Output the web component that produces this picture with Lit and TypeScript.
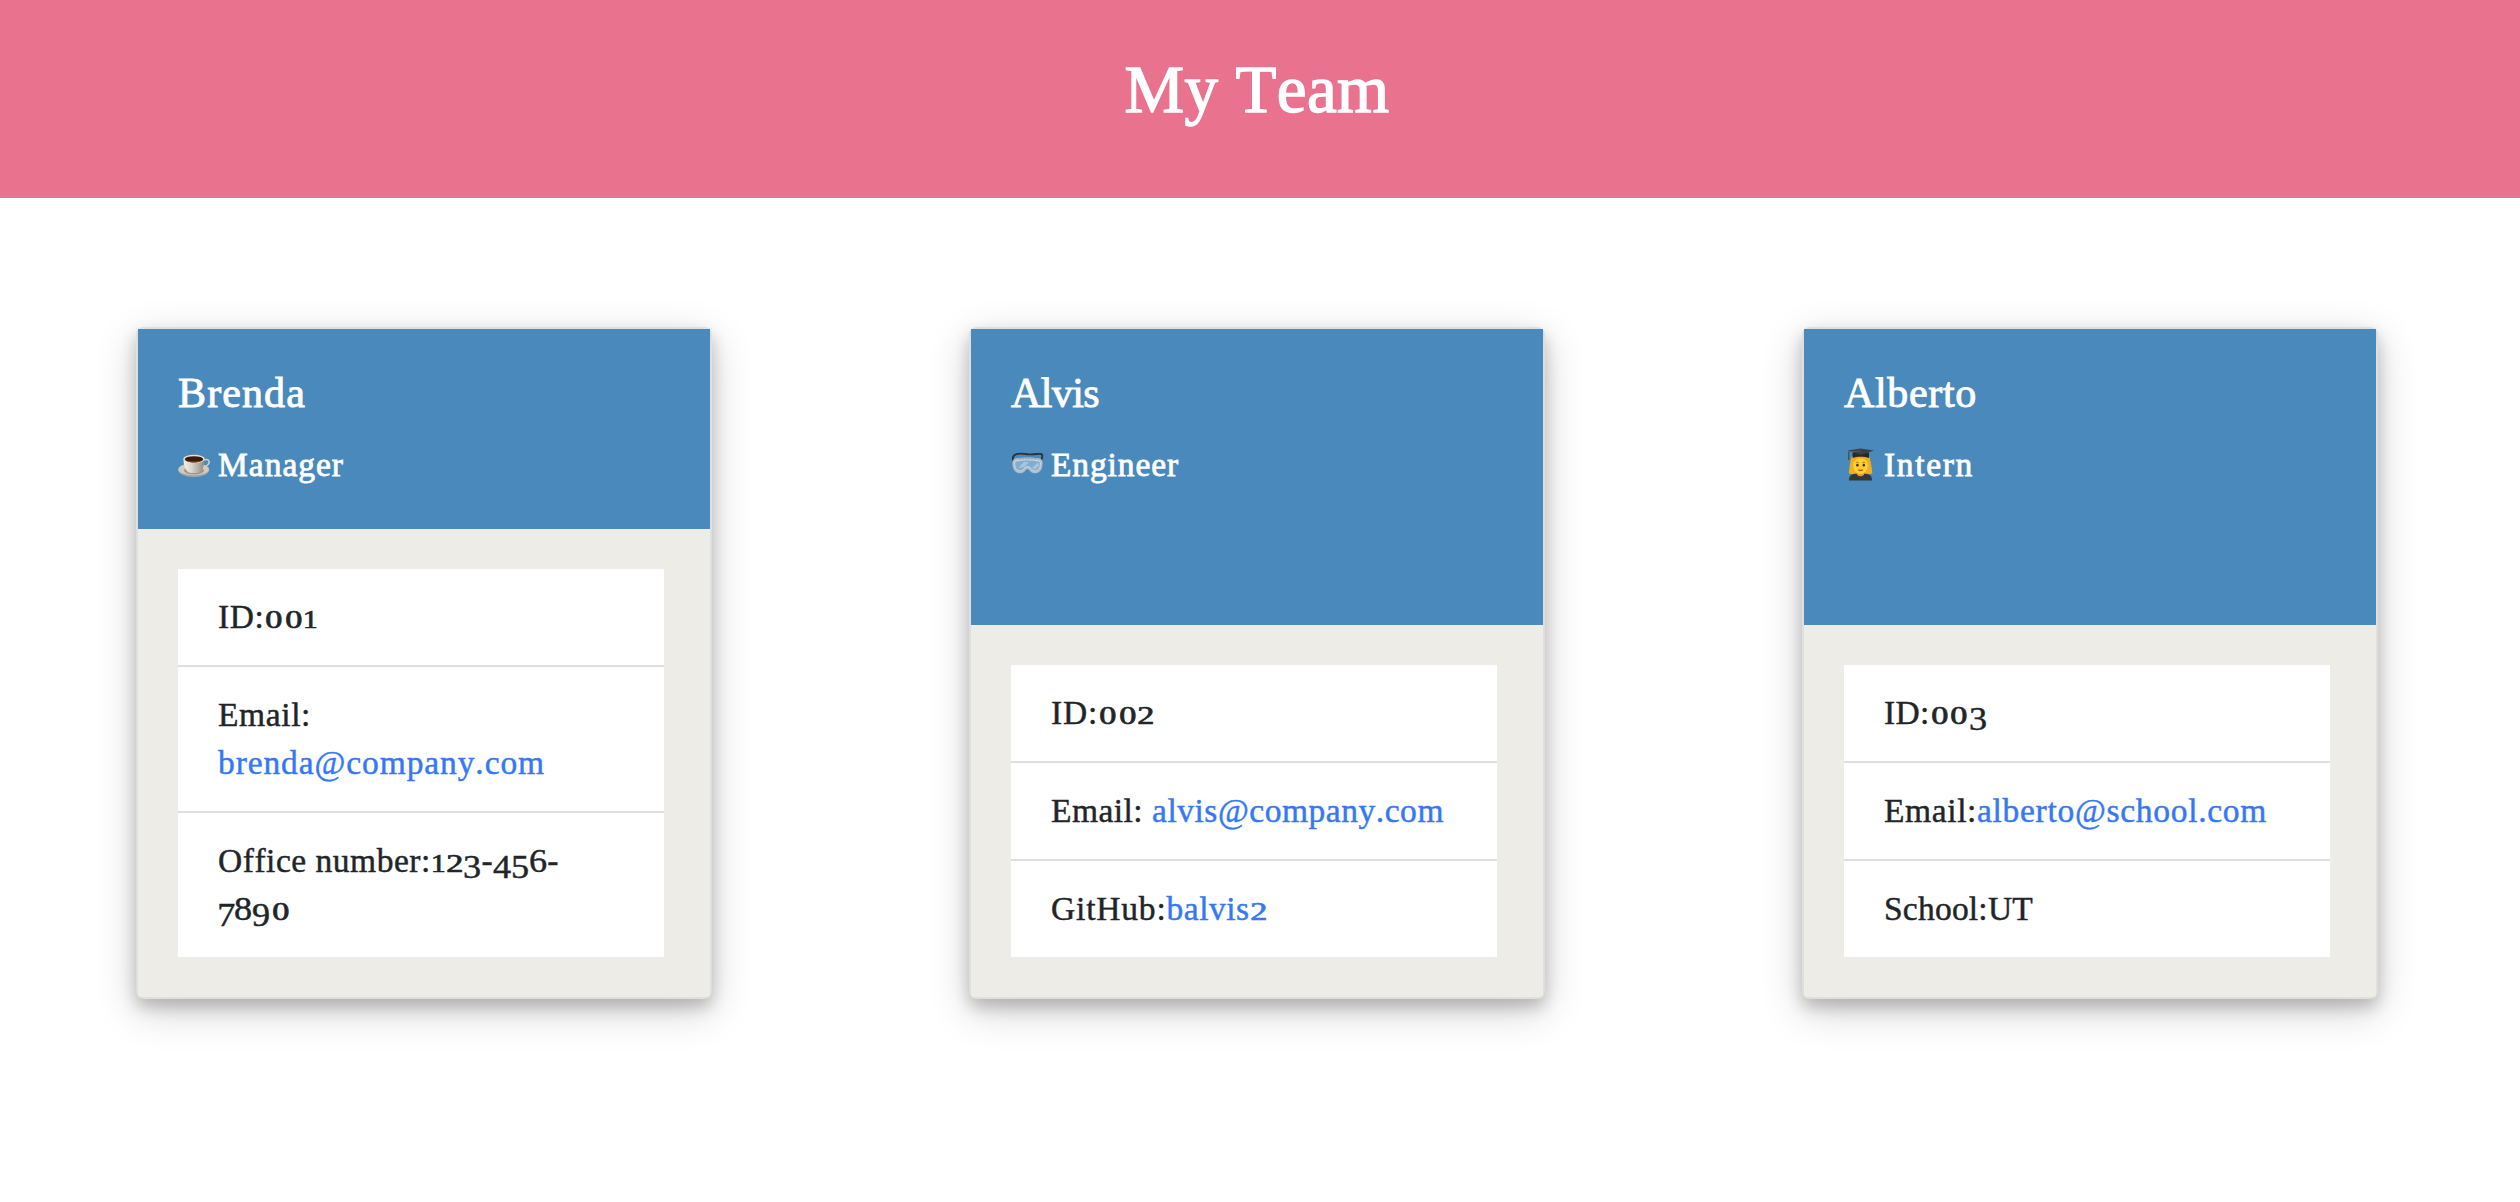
import { LitElement, html, css, TemplateResult } from "lit";
import { customElement, property } from "lit/decorators.js";

interface Segment {
  text: string;
  width: number;
  href?: string;
}

interface Member {
  name: Segment;
  role: Segment;
  icon: TemplateResult;
  rows: Segment[][][];
}

const coffee = html`<svg class="emoji" viewBox="0 0 34 34" aria-hidden="true">
  <defs>
    <linearGradient id="cup" x1="0" x2="1"><stop offset="0" stop-color="#f4f1ea" /><stop offset=".4" stop-color="#d8d4cb" /><stop offset="1" stop-color="#8f8a80" /></linearGradient>
  </defs>
  <path d="M13 6.500c-4-2.500 1-2.500 0-4.500M15.500 6.500c1-2-2-3 2-4" fill="none" stroke="#5a7086" stroke-width="1" opacity=".6" />
  <ellipse cx="15.700" cy="22.300" rx="15.500" ry="6.700" fill="#aaa69d" />
  <ellipse cx="15.700" cy="21.300" rx="15.300" ry="6" fill="#cfcbc2" />
  <ellipse cx="16" cy="22.500" rx="10" ry="4" fill="#9b968c" />
  <path d="M26 12c5-2 7 2.500 3 5.500-1.500 1.200-3 1.500-5 1.500" fill="none" stroke="#d3cfc7" stroke-width="1.500" />
  <path d="M5.500 11c0 8 3 13.500 7 14h7c4-.5 7-6 7-14z" fill="url(#cup)" />
  <ellipse cx="16" cy="11" rx="10.800" ry="4.200" fill="#e4e0d8" />
  <ellipse cx="16" cy="11.300" rx="9.200" ry="3.100" fill="#3a1a0d" />
  <path d="M8.500 12.500c3 2.500 12 2.500 15 0-3 1-12 1-15 0z" fill="#77452a" />
</svg>`;

const goggles = html`<svg class="emoji" viewBox="0 0 34 34" aria-hidden="true">
  <path d="M2.200 13C.5 6.500 5 4.600 16.500 6.200 26 7.300 32 3.500 31.300 8.500c-.2 2-1 3.500-1.800 5" fill="none" stroke="#2d3238" stroke-width="1.900" />
  <path d="M4 10.500c7-1.500 18-1.500 25 0 3 1 3 5 2 9-1 4.500-5 6.500-9 5.500-3.500-1-3.500-4-5.500-4s-2 3-5.500 4c-4 1-8-1-9-5.500-1-4-1-8 2-9z" fill="#b3bdc5" />
  <path d="M5 13c7-1.500 16-1.500 23 0 1.800.5 1.500 3 1 5.500-.8 3.500-4 5-6.500 4.200-3-1-2.500-4.200-6-4.200s-3 3.200-6 4.200c-2.500.8-5.700-.7-6.500-4.200-.5-2.500-.8-5 1-5.500z" fill="#7fadd3" stroke="#d5dbdf" stroke-width="1" />
  <path d="M7 20l6-6h5l-5 5zM21 20l6-5.500 1 3-4 4z" fill="#b5d1e5" opacity=".7" />
  <path d="M9 9.800v2M12 9.500v2M15 9.500v2M18 9.500v2M21 9.500v2M24 9.800v2" stroke="#8d98a1" stroke-width="1" />
</svg>`;

const student = html`<svg class="emoji" viewBox="0 0 34 34" aria-hidden="true">
  <path d="M8 8C6 13 5.500 20 4.800 25c2.500 2.500 21 2.500 23.600 0C27.600 20 27 13 25 8z" fill="#f0b01e" />
  <path d="M5 32.500c0-4 1.500-6.300 6-6.800h11c4.500.5 6 2.800 6 6.800z" fill="#34373b" />
  <path d="M13 23h7v3.700c-2 2-5 2-7 0z" fill="#e5a019" />
  <ellipse cx="16.500" cy="17.300" rx="7.300" ry="8.600" fill="#ffcf33" />
  <path d="M8.500 17c.5-4 3-5 6-6.500h4c3 1.500 6 2.500 6.500 6.500 1-4 0-7-2-8H10.500c-2 1-3 4-2 8z" fill="#f0ac17" />
  <path d="M11.800 14.800c1-.8 2-.8 3 0M18.300 14.800c1-.8 2-.8 3 0" fill="none" stroke="#9a5c12" stroke-width=".8" />
  <ellipse cx="13.400" cy="17.200" rx="1.200" ry="1.400" fill="#46270f" />
  <ellipse cx="19.800" cy="17.200" rx="1.200" ry="1.400" fill="#46270f" />
  <path d="M14.200 21.800c1.500.9 3.200.9 4.700 0" fill="none" stroke="#b5431d" stroke-width="1.300" />
  <path d="M8.500 4.500V10c4-1.800 12.500-1.800 16.500 0V4.500z" fill="#26282b" />
  <path d="M16.500.4L30 2.600 17 7 3.500 2.600z" fill="#3c3f43" />
  <path d="M4.800 3.500V12" stroke="#43474c" stroke-width="1.200" />
  <path d="M16.500 3L4.800 3.800" stroke="#63676c" stroke-width=".7" />
</svg>`;

const team: Member[] = [
  {
    name: { text: "Brenda", width: 128 },
    role: { text: "Manager", width: 126 },
    icon: coffee,
    rows: [
      [[{ text: "ID:001", width: 100 }]],
      [
        [{ text: "Email:", width: 93 }],
        [{ text: "brenda@company.com", width: 327, href: "mailto:brenda@company.com" }],
      ],
      [[{ text: "Office number:123-456-", width: 341 }], [{ text: "7890", width: 74 }]],
    ],
  },
  {
    name: { text: "Alvis", width: 88 },
    role: { text: "Engineer", width: 128 },
    icon: goggles,
    rows: [
      [[{ text: "ID:002", width: 104 }]],
      [
        [
          { text: "Email: ", width: 101 },
          { text: "alvis@company.com", width: 292, href: "mailto:alvis@company.com" },
        ],
      ],
      [
        [
          { text: "GitHub:", width: 115.5 },
          { text: "balvis2", width: 101, href: "https://github.com/balvis2" },
        ],
      ],
    ],
  },
  {
    name: { text: "Alberto", width: 133 },
    role: { text: "Intern", width: 90 },
    icon: student,
    rows: [
      [[{ text: "ID:003", width: 103 }]],
      [
        [
          { text: "Email:", width: 93 },
          { text: "alberto@school.com", width: 290, href: "mailto:alberto@school.com" },
        ],
      ],
      [[{ text: "School:UT", width: 149 }]],
    ],
  },
];

/** Text tracked to a given advance width, with old-style figures. */
@customElement("tracked-text")
class TrackedText extends LitElement {
  @property() text = "";
  @property({ type: Number }) width = 0;

  static styles = css`
    .run {
      white-space: pre;
      font-kerning: none;
      font-variant-ligatures: none;
    }
    .fig {
      display: inline-block;
      width: 0.54em;
      line-height: 0;
      letter-spacing: 0;
      text-align: center;
      transform: scaleX(1.08);
    }
    .x {
      width: 0.8em;
      font-size: 0.73em;
      -webkit-text-stroke: 0.7px currentColor;
      transform: scaleX(1.4);
    }
    .x.one {
      width: 0.6em;
      transform: scaleX(1.2);
    }
    .x.two {
      width: 0.73em;
    }
    .low {
      vertical-align: -0.165em;
    }
    .low.seven {
      width: 0.49em;
    }
  `;

  private figure(d: string) {
    const kind: Record<string, string> = {
      "0": "x",
      "1": "x one",
      "2": "x two",
      "3": "low",
      "4": "low",
      "5": "low",
      "7": "low seven",
      "9": "low",
    };
    return html`<span class="fig ${kind[d] ?? ""}">${d}</span>`;
  }

  render() {
    const parts = this.text.match(/\d|\D+/g) ?? [];
    return html`<span class="run">${parts.map((p) => (/\d/.test(p) ? this.figure(p) : p))}</span>`;
  }

  firstUpdated() {
    const run = this.renderRoot.querySelector<HTMLElement>(".run")!;
    const letters = this.text.replace(/\d/g, "").length;
    if (!letters) return;
    const natural = run.getBoundingClientRect().width;
    run.style.letterSpacing = `${((this.width - natural) / letters).toFixed(3)}px`;
  }
}

@customElement("app-root")
class AppRoot extends LitElement {
  static styles = css`
    :host {
      display: block;
      min-height: 1202px;
      background: #fff;
      color: #212529;
      font-family: "Liberation Serif", serif;
      font-size: 33.5px;
      line-height: 48px;
      -webkit-text-stroke: 0.45px currentColor;
    }
    * {
      box-sizing: border-box;
    }
    .banner {
      height: 198px;
      padding: 51px 6px 0 0;
      background: #e9738f;
      color: #fff;
      text-align: center;
    }
    .title {
      margin: 0;
      font-size: 67px;
      font-weight: 400;
      line-height: 77px;
      -webkit-text-stroke-width: 1.4px;
    }
    .team {
      display: flex;
      gap: 257px;
      padding: 129px 142px 0 136px;
    }
    .card {
      display: flex;
      flex-direction: column;
      width: 576px;
      height: 672px;
      border: 2px solid #dfdfdf;
      border-radius: 8px;
      background: #dfdfdf;
      box-shadow:
        0 8px 16px 0 rgba(0, 0, 0, 0.2),
        0 12px 40px 0 rgba(0, 0, 0, 0.19);
    }
    .head {
      flex: 1;
      display: flex;
      flex-direction: column;
      gap: 24px;
      padding: 40px;
      background: #4a89bc;
      color: #fff;
    }
    .name,
    .role {
      margin: 0;
      font-weight: 400;
    }
    .name {
      font-size: 42px;
      -webkit-text-stroke-width: 0.9px;
    }
    .role {
      display: flex;
      align-items: center;
      gap: 6px;
      font-size: 33.5px;
      -webkit-text-stroke-width: 0.8px;
    }
    .emoji {
      width: 34px;
      height: 34px;
    }
    .body {
      padding: 40px 46px 40px 40px;
      border-radius: 0 0 3px 3px;
      background: #edece6;
    }
    .list {
      margin: 0;
      padding: 0;
      list-style: none;
      background: #fff;
    }
    .item {
      padding: 24px 40px;
    }
    .item + .item {
      border-top: 2px solid #dfdfdf;
    }
    .line {
      height: 48px;
      white-space: nowrap;
    }
    .link {
      color: #3478f6;
      text-decoration: none;
    }
  `;

  private tracked(s: Segment) {
    return html`<tracked-text .text=${s.text} .width=${s.width}></tracked-text>`;
  }

  render() {
    return html`
      <header class="banner">
        <h1 class="title">${this.tracked({ text: "My Team", width: 265 })}</h1>
      </header>
      <main class="team">
        ${team.map(
          (m) => html`<section class="card">
            <div class="head">
              <h2 class="name">${this.tracked(m.name)}</h2>
              <h3 class="role">${m.icon}${this.tracked(m.role)}</h3>
            </div>
            <div class="body">
              <ul class="list">
                ${m.rows.map(
                  (lines) => html`<li class="item">
                    ${lines.map(
                      (segs) =>
                        html`<div class="line">${segs.map((s) =>
                          s.href ? html`<a class="link" href=${s.href}>${this.tracked(s)}</a>` : this.tracked(s),
                        )}</div>`,
                    )}
                  </li>`,
                )}
              </ul>
            </div>
          </section>`,
        )}
      </main>
    `;
  }
}
